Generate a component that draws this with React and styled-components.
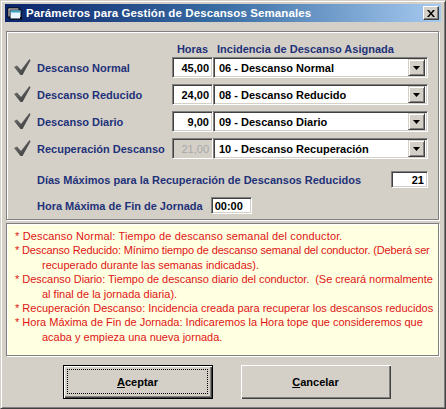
import React from "react";
import styled, { createGlobalStyle } from "styled-components";

const Global = createGlobalStyle`
  html, body { margin: 0; padding: 0; background: #D4D0C8; }
  body { font-family: "Liberation Sans", Arial, sans-serif; }
  * { box-sizing: border-box; }
`;

const Window = styled.div`
  width: 446px;
  height: 409px;
  background: #D4D0C8;
  border-top: 1px solid #D4D0C8;
  border-left: 1px solid #D4D0C8;
  border-right: 1px solid #404040;
  border-bottom: 1px solid #404040;
  box-shadow: inset 1px 1px 0 #fff, inset -1px -1px 0 #808080;
  padding: 3px 4px 4px 4px;
  display: flex;
  flex-direction: column;
`;

const TitleBar = styled.div`
  height: 18px;
  background: linear-gradient(to right, #0A246A 0%, #3A6EA5 50%, #A6CAF0 100%);
  display: flex;
  align-items: center;
  padding: 0 2px 0 2px;
  gap: 3px;
`;

const TitleText = styled.span`
  flex: 1;
  color: #fff;
  font-weight: bold;
  font-size: 11.5px;
  letter-spacing: 0.1px;
  white-space: nowrap;
`;

const CloseButton = styled.div`
  width: 16px;
  height: 14px;
  background: #D4D0C8;
  border-top: 1px solid #fff;
  border-left: 1px solid #fff;
  border-right: 1px solid #404040;
  border-bottom: 1px solid #404040;
  box-shadow: inset -1px -1px 0 #808080;
  display: flex;
  align-items: center;
  justify-content: center;
`;

const Body = styled.div`
  flex: 1;
  padding: 9px 2px 0 1px;
  display: flex;
  flex-direction: column;
`;

const Etched = styled.div`
  border: 1px solid #808080;
  box-shadow: 1px 1px 0 #fff, inset 1px 1px 0 #fff;
`;

const ParamsPanel = styled(Etched)`
  height: 189px;
  flex: none;
  padding: 11px 11px 0 7px;
  display: flex;
  flex-direction: column;
`;

const Columns = styled.div`
  display: grid;
  grid-template-columns: 23px 135px 41px 215px;
  grid-auto-rows: ${(p) => p.$rowH}px;
  row-gap: 6px;
  align-items: center;
  margin-top: ${(p) => p.$mt || 0}px;
`;

const HeaderCell = styled.div`
  grid-column: ${(p) => p.$col};
  font-weight: bold;
  font-size: 11px;
  line-height: 13px;
  color: #1f3278;
  text-align: ${(p) => p.$align || "left"};
  padding-left: ${(p) => p.$pad || 0}px;
  white-space: nowrap;
`;

const Label = styled.div`
  font-weight: bold;
  font-size: 11px;
  color: #1f3278;
  white-space: nowrap;
`;

const Sunken = styled.div`
  height: ${(p) => p.$h || 21}px;
  background: ${(p) => (p.$disabled ? "#D4D0C8" : "#fff")};
  border-top: 1px solid #808080;
  border-left: 1px solid #808080;
  border-right: 1px solid #fff;
  border-bottom: 1px solid #fff;
  box-shadow: inset 1px 1px 0 #404040, inset -1px -1px 0 #D4D0C8;
  display: flex;
  align-items: center;
  font-size: 11px;
  font-weight: bold;
`;

const NumInput = styled(Sunken)`
  justify-content: flex-end;
  padding-right: 3px;
  color: ${(p) => (p.$disabled ? "#a8a8a8" : "#000")};
  font-weight: ${(p) => (p.$disabled ? "normal" : "bold")};
  width: ${(p) => (p.$w ? p.$w + "px" : "auto")};
`;

const Combo = styled(Sunken)`
  padding: 2px 2px 2px 5px;
  justify-content: space-between;
  color: #000;
`;

const DropButton = styled.div`
  width: 17px;
  height: 17px;
  background: #D4D0C8;
  border-top: 1px solid #D4D0C8;
  border-left: 1px solid #D4D0C8;
  border-right: 1px solid #404040;
  border-bottom: 1px solid #404040;
  box-shadow: inset 1px 1px 0 #fff, inset -1px -1px 0 #808080;
  display: flex;
  align-items: center;
  justify-content: center;
`;

const Bottom = styled.div`
  padding-left: 23px;
  margin-top: 12px;
  display: flex;
  flex-direction: column;
  gap: 9px;
`;

const BottomRow = styled.div`
  display: flex;
  align-items: center;
  justify-content: ${(p) => p.$justify || "flex-start"};
  gap: 8px;
  width: 391px;
`;

const TimeInput = styled(Sunken)`
  width: 41px;
  padding-left: 3px;
  color: #000;
`;

const NotesPanel = styled(Etched)`
  margin-top: 3px;
  height: 133px;
  flex: none;
  background: #FFFFE1;
  padding: 5px 0 0 8px;
  color: #e01414;
  font-size: 11px;
  line-height: 14.4px;
  white-space: pre;
  overflow: hidden;
`;

const Line = styled.div`
  padding-left: ${(p) => (p.$cont ? 27 : 0)}px;
  letter-spacing: ${(p) => p.$ls || 0}px;
`;

const ButtonRow = styled.div`
  display: flex;
  justify-content: center;
  gap: 28px;
  padding-left: 8px;
  margin-top: 9px;
`;

const Button = styled.div`
  width: 150px;
  height: 34px;
  background: #D4D0C8;
  border: ${(p) => (p.$default ? "1px solid #000" : "none")};
  box-shadow: inset 1px 1px 0 #fff, inset -1px -1px 0 #404040, inset -2px -2px 0 #808080;
  display: flex;
  align-items: center;
  justify-content: center;
  position: relative;
  font-size: 11px;
  font-weight: bold;
  color: #000;
`;

const Focus = styled.div`
  position: absolute;
  left: 3px;
  top: 3px;
  right: 4px;
  bottom: 4px;
  border: 1px dotted #000;
`;

const U = styled.span`
  text-decoration: underline;
`;

const Check = () => (
  <svg width="17" height="17" viewBox="0 0 17 17">
    <defs>
      <linearGradient id="cg" x1="0" y1="0" x2="1" y2="1">
        <stop offset="0" stopColor="#7a7a7a" />
        <stop offset="1" stopColor="#333" />
      </linearGradient>
    </defs>
    <polygon points="0,8 3,6.5 7,11 15.5,0 16.5,1.5 8.5,16 6.5,16" fill="url(#cg)" />
  </svg>
);

const Arrow = () => (
  <svg width="7" height="4" viewBox="0 0 7 4">
    <polygon points="0,0 7,0 3.5,4" fill="#000" />
  </svg>
);

const AppIcon = () => (
  <svg width="16" height="14" viewBox="0 0 16 14">
    <rect x="1" y="2" width="11" height="9" fill="#fff" stroke="#000" strokeWidth="1" />
    <rect x="3" y="4" width="11" height="9" fill="#e8f4ff" stroke="#000" strokeWidth="1" />
    <rect x="3.5" y="4.5" width="10" height="2" fill="#3aa0c8" />
    <rect x="13" y="11" width="2" height="2" fill="#000" />
  </svg>
);

const rows = [
  ["Descanso Normal", "45,00", "06 - Descanso Normal", false],
  ["Descanso Reducido", "24,00", "08 - Descanso Reducido", false],
  ["Descanso Diario", "9,00", "09 - Descanso Diario", false],
  ["Recuperación Descanso", "21,00", "10 - Descanso Recuperación", true],
];

const notes = [
  [["* Descanso Normal: Tiempo de descanso semanal del conductor.", 0.15]],
  [["* Descanso Reducido: Mínimo tiempo de descanso semanal del conductor. (Deberá ser", -0.15], ["recuperado durante las semanas indicadas).", 0]],
  [["* Descanso Diario: Tiempo de descanso diario del conductor.  (Se creará normalmente", -0.05], ["al final de la jornada diaria).", 0]],
  [["* Recuperación Descanso: Incidencia creada para recuperar los descansos reducidos", 0]],
  [["* Hora Máxima de Fin de Jornada: Indicaremos la Hora tope que consideremos que", 0], ["acaba y empieza una nueva jornada.", 0]],
];

export default function App() {
  return (
    <>
      <Global />
      <Window>
        <TitleBar>
          <AppIcon />
          <TitleText>Parámetros para Gestión de Descansos Semanales</TitleText>
          <CloseButton>
            <svg width="8" height="7" viewBox="0 0 8 7">
              <path d="M0 0 L2 0 L4 2.5 L6 0 L8 0 L5 3.5 L8 7 L6 7 L4 4.5 L2 7 L0 7 L3 3.5 Z" fill="#000" />
            </svg>
          </CloseButton>
        </TitleBar>
        <Body>
          <ParamsPanel>
            <Columns $rowH={13}>
              <HeaderCell $col={3} $align="center">Horas</HeaderCell>
              <HeaderCell $col={4} $pad={4}>Incidencia de Descanso Asignada</HeaderCell>
            </Columns>
            <Columns $rowH={21} $mt={1}>
              {rows.map(([label, hours, inc, dis]) => (
                <React.Fragment key={label}>
                  <Check />
                  <Label>{label}</Label>
                  <NumInput $disabled={dis}>{hours}</NumInput>
                  <Combo>
                    <span>{inc}</span>
                    <DropButton>
                      <Arrow />
                    </DropButton>
                  </Combo>
                </React.Fragment>
              ))}
            </Columns>
            <Bottom>
              <BottomRow $justify="space-between">
                <Label>Días Máximos para la Recuperación de Descansos Reducidos</Label>
                <NumInput $h={17} $w={37}>21</NumInput>
              </BottomRow>
              <BottomRow>
                <Label>Hora Máxima de Fin de Jornada</Label>
                <TimeInput $h={17}>00:00</TimeInput>
              </BottomRow>
            </Bottom>
          </ParamsPanel>
          <NotesPanel>
            {notes.map((lines) =>
              lines.map(([l, ls], i) => (
                <Line key={l} $cont={i > 0} $ls={ls}>
                  {l}
                </Line>
              ))
            )}
          </NotesPanel>
          <ButtonRow>
            <Button $default>
              <Focus />
              <span>
                <U>A</U>ceptar
              </span>
            </Button>
            <Button>
              <span>
                <U>C</U>ancelar
              </span>
            </Button>
          </ButtonRow>
        </Body>
      </Window>
    </>
  );
}
